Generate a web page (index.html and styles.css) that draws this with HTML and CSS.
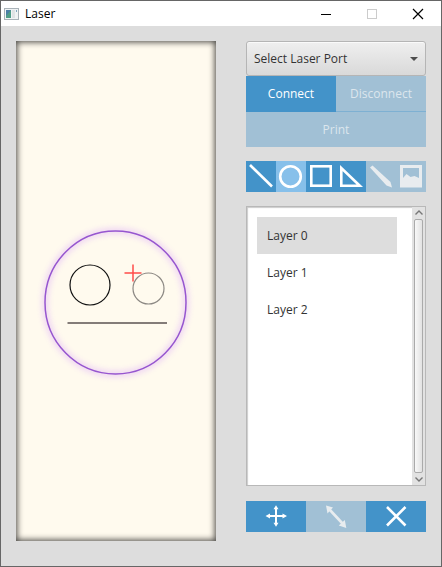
FILE: index.html
```html
<!DOCTYPE html>
<html lang="en">
<head>
<meta charset="utf-8">
<title>Laser</title>
<link rel="stylesheet" href="styles.css">
</head>
<body>
<div class="window">
  <header class="titlebar">
    <svg class="app-icon" width="16" height="16" viewBox="0 0 16 16" aria-hidden="true">
      <rect x="0.500" y="2.500" width="14" height="11" fill="#f0f3f4" stroke="#a9b2b8"/>
      <rect x="2" y="4" width="5" height="8" fill="#4f9d87"/>
      <path d="M2 4h5L2 10z" fill="#4a7fa5"/>
      <rect x="8" y="4" width="3" height="8" fill="#dfe3e5"/>
      <rect x="12" y="4" width="1" height="2" fill="#7fa6bd"/>
    </svg>
    <h1 class="title">Laser</h1>
    <button class="caption" aria-label="Minimize"><svg width="12" height="12" viewBox="0 0 12 12"><path d="M1 6.500h10" stroke="#000"/></svg></button>
    <button class="caption" aria-label="Maximize" disabled><svg width="12" height="12" viewBox="0 0 12 12"><rect x="1.500" y="1.500" width="9" height="9" fill="none" stroke="#ccc"/></svg></button>
    <button class="caption" aria-label="Close"><svg width="12" height="12" viewBox="0 0 12 12"><path d="M1 1l10 10M11 1L1 11" stroke="#000" stroke-width="1.200"/></svg></button>
  </header>
  <main class="content">
    <section class="bed" aria-label="Drawing area">
      <svg class="drawing" viewBox="0 0 200 500">
        <ellipse class="glow" cx="99.500" cy="261.500" rx="70.500" ry="71.500"/>
        <ellipse class="selected" cx="99.500" cy="261.500" rx="70.500" ry="71.500"/>
        <circle class="eye" cx="74" cy="244" r="20"/>
        <circle class="eye faint" cx="132.500" cy="247.500" r="15.500"/>
        <path class="mouth" d="M51.500 282H151"/>
        <path class="cursor" d="M108.500 232h17M117 223.500v17"/>
      </svg>
    </section>
    <aside class="panel">
      <div class="connection">
        <div class="port">
          <select class="port-select" aria-label="Laser port"><option>Select Laser Port</option></select>
          <svg class="arrow" width="8" height="4" viewBox="0 0 8 4" aria-hidden="true"><path d="M0 0h8L4 4z" fill="#4d4d4d"/></svg>
        </div>
        <div class="row split">
          <button class="btn">Connect</button>
          <button class="btn off lined" disabled>Disconnect</button>
        </div>
        <button class="btn off print" disabled>Print</button>
      </div>
      <div class="row tools">
        <button class="btn" aria-label="Line"><svg width="30" height="31" viewBox="0 0 30 31"><path class="stroke" d="M4 4L26 25.500"/></svg></button>
        <button class="btn active" aria-label="Circle"><svg width="30" height="31" viewBox="0 0 30 31"><circle class="stroke" cx="14.500" cy="15.500" r="10.300"/></svg></button>
        <button class="btn" aria-label="Rectangle"><svg width="30" height="31" viewBox="0 0 30 31"><rect class="stroke" x="5.300" y="5.300" width="19.400" height="19.400"/></svg></button>
        <button class="btn" aria-label="Triangle"><svg width="30" height="31" viewBox="0 0 30 31"><path class="stroke" d="M5.300 7v17.700h18.500z"/></svg></button>
        <button class="btn off" aria-label="Pencil" disabled><svg width="30" height="31" viewBox="0 0 30 31"><path class="fill" d="M4 6.500L6.500 4.500L24.500 21L26 26.500L20.500 24.500z"/></svg></button>
        <button class="btn off" aria-label="Image" disabled><svg width="30" height="31" viewBox="0 0 30 31"><path class="fill" fill-rule="evenodd" d="M4 4h22v22.500H4zM7 7v10l3.500-4 4 3 4-1 4.500 2V7z"/></svg></button>
      </div>
      <div class="layers">
        <ul class="layer-list">
          <li><button class="layer current" aria-pressed="true">Layer 0</button></li>
          <li><button class="layer">Layer 1</button></li>
          <li><button class="layer">Layer 2</button></li>
        </ul>
        <div class="scrollbar" aria-hidden="true">
          <svg width="8" height="5" viewBox="0 0 8 5"><path class="chevron" d="M0.500 4.500L4 1l3.500 3.500"/></svg>
          <div class="thumb"></div>
          <svg width="8" height="5" viewBox="0 0 8 5"><path class="chevron" d="M0.500 0.500L4 4l3.500-3.500"/></svg>
        </div>
      </div>
      <div class="row actions">
        <button class="btn" aria-label="Move"><svg width="60" height="31" viewBox="0 0 60 31"><path class="stroke thin" d="M23 15h14M30 8v14"/><path class="fill" d="M19.500 15l4.500-2.500v5zM41 15l-4.500-2.500v5zM30 4.200l-2.500 4h5zM30 25.800l-2.500-4h5z"/></svg></button>
        <button class="btn off" aria-label="Resize" disabled><svg width="60" height="31" viewBox="0 0 60 31"><path class="stroke" d="M23 8l14 15"/><path class="fill" d="M20 4.500l7 2-5.500 6zM40.300 27l-1.500-8-6 5.500z"/></svg></button>
        <button class="btn" aria-label="Delete"><svg width="60" height="31" viewBox="0 0 60 31"><path class="stroke" d="M21 6l18.500 18.500M39.500 6L21 24.500"/></svg></button>
      </div>
    </aside>
  </main>
</div>
</body>
</html>
```
FILE: styles.css
```css
* {
  box-sizing: border-box;
}

body {
  margin: 0;
  font: 12px/18px "Open Sans", "Noto Sans", sans-serif;
  color: #333;
}

button,
select {
  margin: 0;
  padding: 0;
  border: 0;
  border-radius: 0;
  font: inherit;
  color: inherit;
}

svg {
  display: block;
}

.window {
  display: flex;
  flex-direction: column;
  min-height: 100vh;
  border: 1px solid #666;
  background: #ddd;
}

.titlebar {
  display: flex;
  align-items: center;
  height: 25px;
  padding-left: 3px;
  background: #fff;
}

.title {
  flex: 1;
  margin: 0 0 0 5px;
  font-size: 12px;
  font-weight: 400;
  color: #000;
}

.caption {
  display: grid;
  place-items: center;
  width: 46px;
  height: 100%;
  background: none;
}

.content {
  display: flex;
  flex: 1;
  gap: 30px;
  padding: 15px 15px 25px;
}

.bed {
  flex: 1;
  background: #fffaee;
  box-shadow: inset 0 0 6px 1px rgba(0, 0, 0, 0.75);
}

.drawing {
  width: 100%;
  fill: none;
}

.glow {
  stroke: #c77dff;
  stroke-width: 4px;
  opacity: 0.45;
  filter: blur(3px);
}

.selected {
  stroke: #9656cf;
  stroke-width: 1.5px;
}

.eye {
  stroke: #111;
  stroke-width: 1.2px;
}

.faint {
  stroke: #8c8883;
}

.mouth {
  stroke: #847c78;
  stroke-width: 2px;
}

.cursor {
  stroke: #ff2020;
  stroke-width: 1.5px;
  opacity: 0.8;
}

.panel {
  display: flex;
  flex-direction: column;
  width: 180px;
}

.port {
  position: relative;
}

.port-select {
  display: block;
  width: 100%;
  height: 35px;
  padding: 0 7px;
  appearance: none;
  border: 1px solid #b5b5b5;
  border-radius: 3px;
  background: linear-gradient(#efefef, #d9d9d9);
  box-shadow: inset 0 1px #fafafa;
}

.arrow {
  position: absolute;
  top: 16px;
  right: 8px;
  pointer-events: none;
}

.row {
  display: flex;
}

.btn {
  display: grid;
  flex: 1;
  place-items: center;
  height: 31px;
  background: #4393c9;
  color: #fff;
}

.split .btn {
  height: 36px;
}

.off {
  background: #a1c0d5;
  color: #dce6ed;
}

.lined {
  border-bottom: 1px solid #7eb0d2;
}

.print {
  width: 100%;
  height: 35px;
}

.active {
  background: #87c0ea;
}

.tools {
  margin: 14px 0;
}

.stroke {
  fill: none;
  stroke: #fff;
  stroke-width: 2.6px;
}

.thin {
  stroke-width: 2px;
}

.fill {
  fill: #fff;
}

.off .stroke {
  stroke: #e8ecef;
}

.off .fill {
  fill: #e8ecef;
}

.layers {
  display: flex;
  height: 280px;
  border: 1px solid #b8b8b8;
  background: #fff;
  box-shadow: inset 1px 1px 1px #ccc;
}

.layer-list {
  flex: 1;
  margin: 0;
  padding: 10px 15px 10px 10px;
  list-style: none;
}

.layer {
  display: block;
  width: 100%;
  height: 37px;
  padding: 0 10px;
  background: none;
  text-align: left;
}

.current {
  background: #ddd;
}

.scrollbar {
  display: flex;
  flex-direction: column;
  align-items: center;
  gap: 4px;
  width: 13px;
  padding: 3px 1px;
  background: #e2e2e2;
}

.thumb {
  flex: 1;
  width: 9px;
  border: 1px solid #aaa;
  border-radius: 2px;
  background: linear-gradient(to right, #f8f8f8, #e2e2e2);
}

.chevron {
  fill: none;
  stroke: #777;
  stroke-width: 1.4px;
}

.actions {
  margin-top: 15px;
}
```
